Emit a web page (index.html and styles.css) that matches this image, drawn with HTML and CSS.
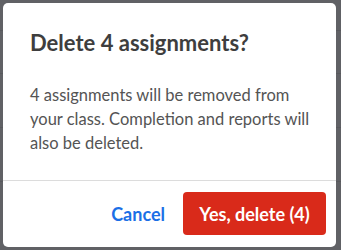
FILE: index.html
```html
<!DOCTYPE html>
<html>
<head>
<meta charset="utf-8">
<link rel="stylesheet" href="styles.css">
</head>
<body>
<div class="page">
  <div class="row r1"></div>
  <div class="row r2"></div>
  <div class="row r3"></div>
  <div class="row r4"></div>
</div>
<div class="overlay">
  <div class="dialog" role="dialog">
    <div class="dialog-body">
      <h2 class="title">Delete 4 assignments?</h2>
      <p class="text">4 assignments will be removed from your class. Completion and reports will also be deleted.</p>
    </div>
    <div class="dialog-footer">
      <button class="btn btn-link">Cancel</button>
      <button class="btn btn-danger">Yes, delete (4)</button>
    </div>
  </div>
</div>
</body>
</html>
```
FILE: styles.css
```css
* { box-sizing: border-box; }
html, body { margin: 0; padding: 0; }
body {
  width: 341px;
  height: 250px;
  overflow: hidden;
  background: #606165;
  font-family: Lato, "Open Sans", sans-serif;
}
.page { display: flex; flex-direction: column; }
.row { border-bottom: 1px solid #58595d; }
.r1 { height: 31px; }
.r2 { height: 43px; }
.r3 { height: 54px; }
.r4 { height: 54px; }
.overlay {
  position: fixed;
  inset: 0;
  padding: 3px 5px 3px 3px;
}
.dialog {
  background: #fff;
  border-radius: 5px;
  height: 244px;
  display: flex;
  flex-direction: column;
}
.dialog-body {
  padding: 26px 20px 0 27px;
  height: 178px;
  border-bottom: 1px solid #dcdcdc;
}
.title {
  margin: 0;
  font-size: 22px;
  line-height: 28px;
  font-weight: 700;
  color: #3e3e3e;
}
.text {
  margin: 26px 0 0 0;
  font-size: 16.5px;
  line-height: 24px;
  color: #545454;
}
.dialog-footer {
  display: flex;
  justify-content: flex-end;
  align-items: center;
  gap: 6px;
  padding: 11px 10px 11px 10px;
}
.btn {
  font-family: Lato, "Open Sans", sans-serif;
  font-size: 18px;
  font-weight: 700;
  border: 0;
  border-radius: 4px;
  height: 43px;
  padding: 0 12px;
  cursor: pointer;
}
.btn-link {
  background: transparent;
  color: #1b6fe6;
}
.btn-danger {
  background: #d92a1a;
  color: #fff;
  width: 143px;
}
```
